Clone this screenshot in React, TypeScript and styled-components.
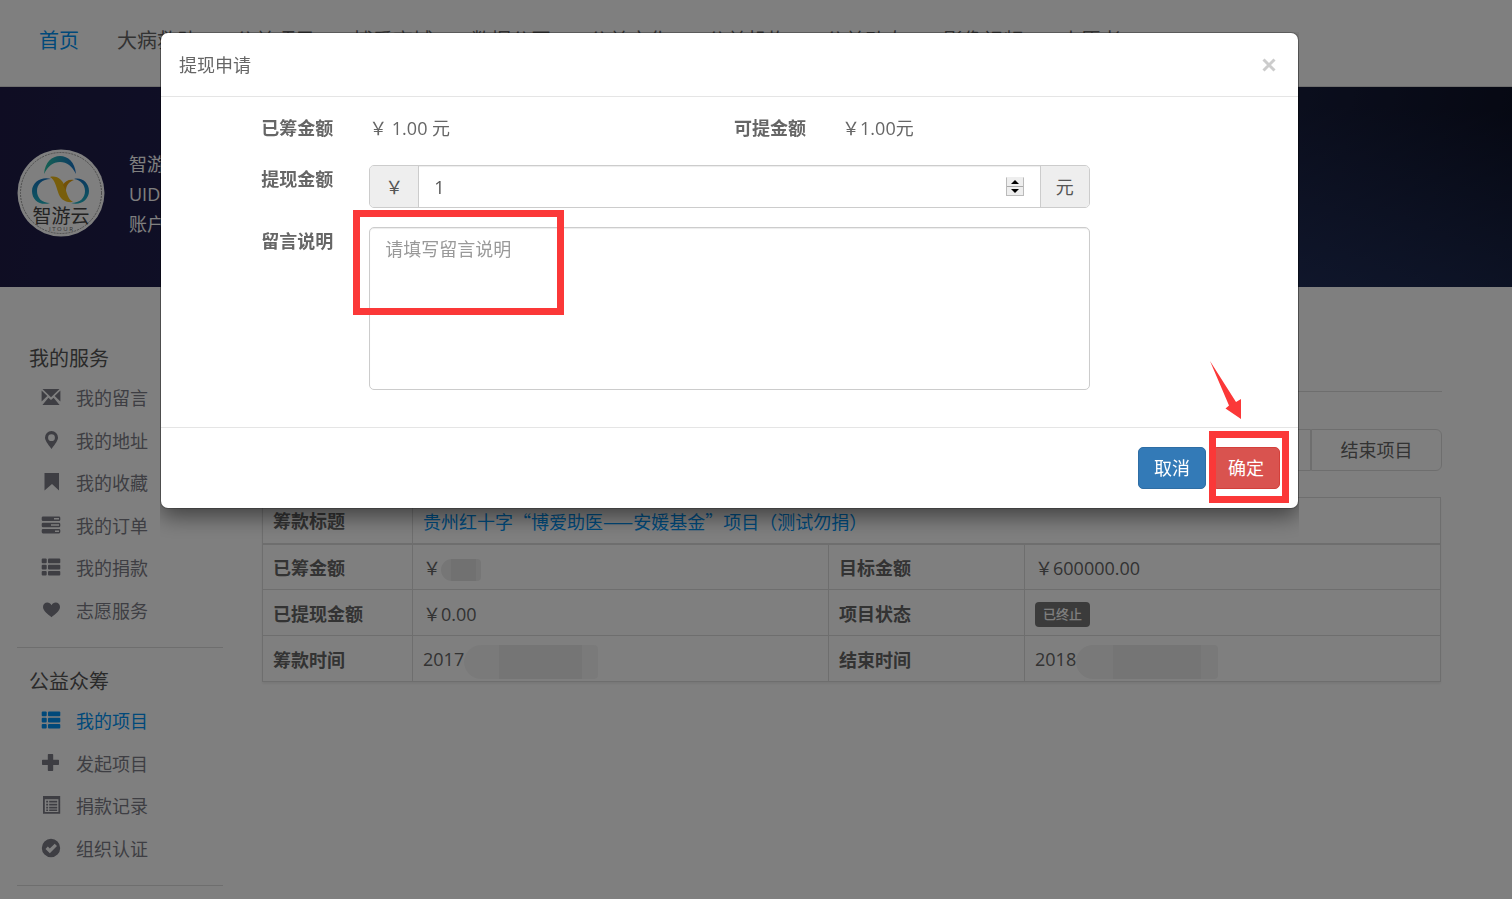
import React from "react";
import styled, { createGlobalStyle, css } from "styled-components";

const FONT = `"Open Sans", "Noto Sans CJK SC", sans-serif`;
const RED = "#fb3838";
const BLUE = "#0092f4";

const GlobalStyle = createGlobalStyle`
  *, *::before, *::after { box-sizing: border-box; }
  body { margin: 0; background: #fff; color: #666; font: 18px/26px ${FONT}; }
  button, input, textarea { font: inherit; color: inherit; }
  a { text-decoration: none; }
`;

/* ---------- page behind the dialog ---------- */

const Page = styled.div`
  min-height: 100vh;
  overflow: hidden;
`;

const TopNav = styled.nav`
  display: flex;
  align-items: center;
  gap: 38px;
  height: 87px;
  padding: 0 39px 4px;
  border-bottom: 1px solid #ddd;
`;

const NavLink = styled.a<{ $active?: boolean }>`
  flex: none;
  font-size: 20px;
  line-height: 30px;
  color: ${(p) => (p.$active ? BLUE : "#666")};
`;

const Banner = styled.header`
  display: flex;
  align-items: center;
  gap: 24px;
  min-height: 200px;
  padding: 12px 17px 0;
  color: #fff;
  background:
    radial-gradient(ellipse 60% 120% at 88% 130%, rgba(44, 66, 124, 0.6), transparent),
    linear-gradient(100deg, #1e1b46 0%, #20255a 45%, #1c2448 75%, #0c1024 100%);
`;

const BannerText = styled.div`
  padding-top: 2px;
  line-height: 30px;
`;

const Columns = styled.div`
  display: flex;
  gap: 39px;
  padding: 52px 70px 0 17px;
`;

const Sidebar = styled.aside`
  flex: none;
  width: 206px;
`;

const SideSection = styled.section`
  padding-bottom: 15px;
  margin-bottom: 14px;
  border-bottom: 1px solid #ddd;
`;

const SideTitle = styled.h2`
  margin: 0;
  padding: 2px 0 0 12px;
  font-size: 20px;
  font-weight: 400;
  line-height: 36px;
  color: #555;
`;

const SideList = styled.ul<{ $height: number }>`
  display: grid;
  grid-auto-rows: 1fr;
  min-height: ${(p) => p.$height}px;
  margin: 0;
  padding: 0 0 0 24px;
  list-style: none;
`;

const SideLink = styled.a<{ $active?: boolean }>`
  display: flex;
  align-items: center;
  gap: 15px;
  height: 100%;
  color: ${(p) => (p.$active ? BLUE : "#7c7c86")};
`;

const Main = styled.main`
  flex: 1;
  min-width: 0;
`;

const MainHeader = styled.div`
  height: 53px;
  border-bottom: 1px solid #ddd;
`;

const ButtonGroup = styled.div`
  display: flex;
  justify-content: flex-end;
  margin: 37px 0 26px;
`;

const GroupButton = styled.button`
  min-width: 131px;
  height: 42px;
  padding: 0 28px;
  border: 1px solid #ddd;
  background: #fff;
  &:first-child { border-radius: 6px 0 0 6px; }
  &:last-child { border-radius: 0 6px 6px 0; }
`;

const DataTable = styled.table`
  width: calc(100% - 1px);
  table-layout: fixed;
  border-collapse: collapse;
  box-shadow: 0 2px 2px rgba(0, 0, 0, 0.06);
  col:nth-child(1) { width: 150px; }
  col:nth-child(3) { width: 196px; }
  th, td {
    height: 46px;
    padding: 2px 10px 0;
    border: 1px solid #ddd;
    text-align: left;
    white-space: nowrap;
  }
  thead th, thead td { border-bottom-width: 2px; }
`;

const ProjectLink = styled.a`
  font-family: "Noto Sans CJK SC", sans-serif;
  color: ${BLUE};
`;

const Badge = styled.span`
  display: inline-block;
  padding: 0 8px;
  border-radius: 4px;
  background: #777;
  color: #fff;
  font-size: 13px;
  font-weight: 500;
  line-height: 25px;
  vertical-align: middle;
`;

const Smudge = styled.span<{ $w: number; $h: number; $from: string; $to: string }>`
  display: inline-block;
  width: ${(p) => p.$w}px;
  height: ${(p) => p.$h}px;
  margin: -6px 0;
  border-radius: ${(p) => p.$h / 2}px 4px 4px ${(p) => p.$h / 2}px;
  background: linear-gradient(90deg, ${(p) => p.$from} 26%, ${(p) => p.$to} 26% 88%, ${(p) => p.$from} 88%);
  vertical-align: middle;
`;

/* ---------- dialog ---------- */

const Backdrop = styled.div`
  position: fixed;
  inset: 0;
  padding: 33px 214px 0 161px;
  background: rgba(0, 0, 0, 0.5);
`;

const Dialog = styled.section`
  border-radius: 7px;
  background: #fff;
  box-shadow: 0 0 0 1px rgba(0, 0, 0, 0.2), 0 8px 22px rgba(0, 0, 0, 0.5);
  clip-path: inset(-1px -1px -40px -1px);
`;

const DialogHeader = styled.header`
  display: flex;
  align-items: center;
  justify-content: space-between;
  height: 64px;
  padding: 0 18px;
  border-bottom: 1px solid #e5e5e5;
`;

const DialogTitle = styled.h1`
  margin: 0;
  font-size: 18px;
  font-weight: 400;
`;

const CloseButton = styled.button`
  display: flex;
  padding: 4px;
  border: 0;
  background: none;
  color: #ccc;
`;

const DialogBody = styled.form`
  padding: 17px 1px 18px;
`;

const Row = styled.div`
  display: grid;
  grid-template-columns: repeat(12, minmax(0, 1fr));
  align-items: start;
  margin-bottom: 19px;
  &:first-child { min-height: 32px; }
`;

const labelCell = css<{ $span: number }>`
  grid-column: span ${(p) => p.$span};
  padding-right: 18px;
  font-weight: 700;
  line-height: 28px;
  white-space: nowrap;
  display: flex;
  justify-content: flex-end;
`;
const Label = styled.label<{ $span: number }>`${labelCell}`;
const Term = styled.div<{ $span: number }>`${labelCell}`;

const Cell = styled.div<{ $span: number }>`
  position: relative;
  grid-column: span ${(p) => p.$span};
  padding: 0 18px;
  line-height: 28px;
`;

const InputGroup = styled.div`
  display: flex;
  height: 43px;
  border: 1px solid #ccc;
  border-radius: 5px;
  background: #fff;
  overflow: hidden;
  box-shadow: inset 0 1px 1px rgba(0, 0, 0, 0.075);
`;

const Addon = styled.span<{ $end?: boolean }>`
  display: flex;
  align-items: center;
  justify-content: center;
  width: 49px;
  background: #eee;
  color: #555;
  ${(p) => (p.$end ? "border-left" : "border-right")}: 1px solid #ccc;
`;

const NumberInput = styled.input`
  flex: 1;
  min-width: 0;
  padding: 0 15px;
  border: 0;
  outline: 0;
  background: transparent;
  color: #555;
  appearance: textfield;
  &::-webkit-inner-spin-button { display: none; }
`;

const Stepper = styled.span`
  display: flex;
  flex-direction: column;
  align-self: center;
  width: 18px;
  margin-right: 16px;
  border: 1px solid #bbb;
  border-top-color: #eee;
`;

const StepButton = styled.button`
  display: flex;
  align-items: center;
  justify-content: center;
  height: 8px;
  padding: 0;
  border: 0;
  background: #eee;
  & + & { border-top: 1px solid #aaa; height: 9px; }
`;

const MessageBox = styled.textarea`
  display: block;
  width: 100%;
  height: 163px;
  padding: 7px 15px;
  border: 1px solid #ccc;
  border-radius: 5px;
  outline: 0;
  resize: none;
  background: #fff;
  box-shadow: inset 0 1px 1px rgba(0, 0, 0, 0.075);
  &::placeholder { color: #999; }
`;

const DialogFooter = styled.footer`
  display: flex;
  justify-content: flex-end;
  gap: 6px;
  padding: 19px 18px;
  border-top: 1px solid #e5e5e5;
`;

const ActionButton = styled.button<{ $danger?: boolean }>`
  height: 42px;
  padding: 0 15px;
  border: 1px solid ${(p) => (p.$danger ? "#d43f3a" : "#2e6da4")};
  border-radius: 5px;
  background: ${(p) => (p.$danger ? "#d9534f" : "#337ab7")};
  color: #fff;
`;

const Marked = styled.div`
  position: relative;
`;

const MessageMark = styled.div`
  position: absolute;
  left: 2px;
  top: -17px;
  width: 211px;
  height: 105px;
  border: 7px solid ${RED};
  pointer-events: none;
`;

const ConfirmMark = styled.div`
  position: absolute;
  left: -3px;
  top: -16px;
  width: 80px;
  height: 72px;
  border: 7px solid ${RED};
  pointer-events: none;
`;

const MarkArrow = styled.svg`
  position: absolute;
  left: -3px;
  top: -87px;
  pointer-events: none;
`;

/* ---------- icons ---------- */

const glyphs: Record<string, React.ReactNode> = {
  mail: <path d="M1.5 2h17L10 10.2zM.6 3.4 6.3 9 .6 14.6zM19.4 3.4v11.2L13.7 9zM1.4 18l6-7.2L10 13l2.6-2.2 6 7.2z" />,
  pin: <path fillRule="evenodd" d="M10.500 1a6.500 6.500 0 0 1 6.500 6.600c0 3-2.700 6.300-6.500 11.400C6.700 13.900 4 10.600 4 7.600A6.500 6.500 0 0 1 10.500 1zm0 3.300a3.400 3.400 0 1 0 0 6.800 3.400 3.400 0 0 0 0-6.800z" />,
  bookmark: <path d="M3.500 1H18v17.500l-7-6.500-7.500 6.500z" />,
  orders: (
    <path fillRule="evenodd" d="M2 1.500h16q1.300 0 1.300 1.300v1.900q0 1.300-1.300 1.300H2Q.7 6 .7 4.700V2.800Q.7 1.500 2 1.500zm11 1.600v1.400h5V3.100zM2 7.700h16q1.300 0 1.300 1.300v1.900q0 1.300-1.300 1.300H2Q.7 12.200.7 10.900V9Q.7 7.700 2 7.700zm8 1.600v1.400h8V9.300zM2 13.900h16q1.300 0 1.300 1.300v1.900q0 1.300-1.300 1.300H2q-1.300 0-1.300-1.300v-1.900q0-1.300 1.300-1.300zm12 1.600v1.400h4v-1.400z" />
  ),
  list: (
    <>
      {[1.5, 7.7, 13.9].map((y) => (
        <React.Fragment key={y}>
          <rect x="0.700" y={y} width="5" height="4.700" rx="1" />
          <rect x="7" y={y} width="12.300" height="4.700" rx="1" />
        </React.Fragment>
      ))}
    </>
  ),
  heart: <path d="M10.500 17.200C7 14 2 10.800 2 6.900 2 4.200 4 2.500 6.300 2.500c1.800 0 3.300 1 4.200 2.700.9-1.700 2.400-2.700 4.200-2.700C17 2.500 19 4.200 19 6.900c0 3.900-5 7.100-8.500 10.300z" />,
  plus: <path d="M7.500 1h4q.7 0 .7.700v5.100h5.100q.7 0 .7.700v3.800q0 .7-.7.700h-5.100v5.300q0 .7-.7.700h-4q-.7 0-.7-.7V12H1.700Q1 12 1 11.300V7.500q0-.7.700-.7h5.100V1.700q0-.7.700-.7z" />,
  record: (
    <path fillRule="evenodd" d="M2 1h17.200v17.800H2zm1.800 3.300v12.800h13.600V4.300zM5.200 5.800h1.900v1.700H5.200zm3 0h8v1.700h-8zm-3 3h1.900v1.700H5.200zm3 0h8v1.700h-8zm-3 3h1.900v1.700H5.200zm3 0h8v1.700h-8zm-3 2.600h1.900v1.500H5.200zm3 0h8v1.500h-8z" />
  ),
  check: <path fillRule="evenodd" d="M10 .8a9.200 9.200 0 1 1 0 18.400A9.200 9.200 0 0 1 10 .8zm3.700 4.900-4.900 4.900-2-2L4.500 11l4.300 4.200L16 8z" />,
};

const Glyph = styled.svg`
  flex: none;
  width: 20px;
  height: 20px;
  margin-bottom: 2px;
  fill: currentColor;
`;

function Logo() {
  return (
    <svg width="88" height="88" viewBox="0 0 88 88" aria-label="智游云">
      <defs>
        <linearGradient id="arc" x1="0" x2="1">
          <stop offset="0" stopColor="#2cc4a6" />
          <stop offset="1" stopColor="#1672c8" />
        </linearGradient>
        <linearGradient id="ring" x1="0" x2="0" y1="0" y2="1">
          <stop offset="0" stopColor="#1673c0" />
          <stop offset="1" stopColor="#1fb4c4" />
        </linearGradient>
      </defs>
      <circle cx="44" cy="44" r="43.500" fill="#fff" />
      <circle cx="44" cy="44" r="40.500" fill="none" stroke="#999" strokeDasharray="2 1" />
      <path d="M27 25C28 13 35 7 43 7s15 6 16 18C55 17 50 13 43 13s-12 4-16 12z" fill="url(#arc)" />
      <path d="M34 30c-9-3-19 3-19 12 0 10 9 15 18 12-8 0-13-5-13-12s5-12 14-12z" fill="url(#ring)" />
      <path d="M57 30c8-2 15 4 15 12 0 9-9 15-18 12 9 0 14-5 14-12 0-6-4-11-11-12z" fill="url(#ring)" />
      <path d="M33 28c7-2 13 3 15 10s3 12 8 15c-8 1-13-3-15-10-2-6-3-12-8-15z" fill="#f0bc18" />
      <path d="M46 36c2-4 6-6 11-5-5 2-8 5-8 11z" fill="#e6a210" />
      <text x="44" y="74" textAnchor="middle" fontSize="19" fontFamily={FONT} fill="#444">
        智游云
        <tspan x="44" y="82" fontSize="6" fill="#666">I T O U R</tspan>
      </text>
    </svg>
  );
}

/* ---------- content ---------- */

const navItems = ["首页", "大病救助", "公益项目", "博爱商城", "数据公开", "公益文化", "公益机构", "公益动态", "影像视频", "志愿者"];

const services = [
  { icon: "mail", text: "我的留言" },
  { icon: "pin", text: "我的地址" },
  { icon: "bookmark", text: "我的收藏" },
  { icon: "orders", text: "我的订单" },
  { icon: "list", text: "我的捐款" },
  { icon: "heart", text: "志愿服务" },
];

const funding = [
  { icon: "list", text: "我的项目", active: true },
  { icon: "plus", text: "发起项目" },
  { icon: "record", text: "捐款记录" },
  { icon: "check", text: "组织认证" },
];

type SideItem = { icon: string; text: string; active?: boolean };

function SideMenu({ title, items, height }: { title: string; items: SideItem[]; height: number }) {
  return (
    <SideSection>
      <SideTitle>{title}</SideTitle>
      <SideList $height={height}>
        {items.map((item) => (
          <li key={item.text}>
            <SideLink href="#" $active={item.active}>
              <Glyph viewBox="0 0 20 20" aria-hidden="true">{glyphs[item.icon]}</Glyph>
              {item.text}
            </SideLink>
          </li>
        ))}
      </SideList>
    </SideSection>
  );
}

export default function App() {
  return (
    <>
      <GlobalStyle />
      <Page>
        <TopNav>
          {navItems.map((text, i) => (
            <NavLink key={text} href="#" $active={i === 0}>{text}</NavLink>
          ))}
        </TopNav>
        <Banner>
          <Logo />
          <BannerText>
            <div>智游云</div>
            <div>UID：</div>
            <div>账户</div>
          </BannerText>
        </Banner>
        <Columns>
          <Sidebar>
            <SideMenu title="我的服务" items={services} height={255} />
            <SideMenu title="公益众筹" items={funding} height={170} />
          </Sidebar>
          <Main>
            <MainHeader />
            <ButtonGroup>
              <GroupButton type="button" aria-label="申请提现" />
              <GroupButton type="button">结束项目</GroupButton>
            </ButtonGroup>
            <DataTable>
              <colgroup><col /><col /><col /><col /></colgroup>
              <thead>
                <tr>
                  <th scope="row">筹款标题</th>
                  <td colSpan={3}><ProjectLink href="#">贵州红十字“博爱助医——安媛基金”项目（测试勿捐）</ProjectLink></td>
                </tr>
              </thead>
              <tbody>
                <tr>
                  <th scope="row">已筹金额</th>
                  <td>￥<Smudge $w={40} $h={22} $from="#ececec" $to="#e2e2e2" /></td>
                  <th scope="row">目标金额</th>
                  <td>￥600000.00</td>
                </tr>
                <tr>
                  <th scope="row">已提现金额</th>
                  <td>￥0.00</td>
                  <th scope="row">项目状态</th>
                  <td><Badge>已终止</Badge></td>
                </tr>
                <tr>
                  <th scope="row">筹款时间</th>
                  <td>2017<Smudge $w={134} $h={34} $from="#f5f5f5" $to="#ebebeb" /></td>
                  <th scope="row">结束时间</th>
                  <td>2018<Smudge $w={142} $h={34} $from="#f2f2f2" $to="#ebebeb" /></td>
                </tr>
              </tbody>
            </DataTable>
          </Main>
        </Columns>
      </Page>

      <Backdrop>
        <Dialog role="dialog" aria-labelledby="dialog-title">
          <DialogHeader>
            <DialogTitle id="dialog-title">提现申请</DialogTitle>
            <CloseButton type="button" aria-label="关闭">
              <svg width="14" height="14" viewBox="0 0 14 14" stroke="currentColor" strokeWidth="3">
                <path d="M1.500 1.500l11 11M12.500 1.500l-11 11" />
              </svg>
            </CloseButton>
          </DialogHeader>
          <DialogBody>
            <Row>
              <Term $span={2}>已筹金额</Term>
              <Cell $span={4}>￥ 1.00 元</Cell>
              <Term $span={1}>可提金额</Term>
              <Cell $span={5}>￥1.00元</Cell>
            </Row>
            <Row>
              <Label $span={2} htmlFor="amount">提现金额</Label>
              <Cell $span={8}>
                <InputGroup>
                  <Addon>￥</Addon>
                  <NumberInput id="amount" type="number" defaultValue={1} />
                  <Stepper>
                    <StepButton type="button" aria-label="增加">
                      <svg width="8" height="4" viewBox="0 0 8 4"><path d="M4 0l4 4H0z" fill="#000" /></svg>
                    </StepButton>
                    <StepButton type="button" aria-label="减少">
                      <svg width="8" height="4" viewBox="0 0 8 4"><path d="M0 0h8L4 4z" fill="#000" /></svg>
                    </StepButton>
                  </Stepper>
                  <Addon $end>元</Addon>
                </InputGroup>
              </Cell>
            </Row>
            <Row>
              <Label $span={2} htmlFor="message">留言说明</Label>
              <Cell $span={8}>
                <MessageBox id="message" placeholder="请填写留言说明" />
                <MessageMark />
              </Cell>
            </Row>
          </DialogBody>
          <DialogFooter>
            <ActionButton type="button">取消</ActionButton>
            <Marked>
              <ActionButton type="button" $danger>确定</ActionButton>
              <ConfirmMark />
              <MarkArrow width="34" height="60" viewBox="0 0 34 60" aria-hidden="true">
                <path d="M1 1L27 42l5-3v20L16.500 48.500l3.500-3z" fill={RED} />
              </MarkArrow>
            </Marked>
          </DialogFooter>
        </Dialog>
      </Backdrop>
    </>
  );
}
